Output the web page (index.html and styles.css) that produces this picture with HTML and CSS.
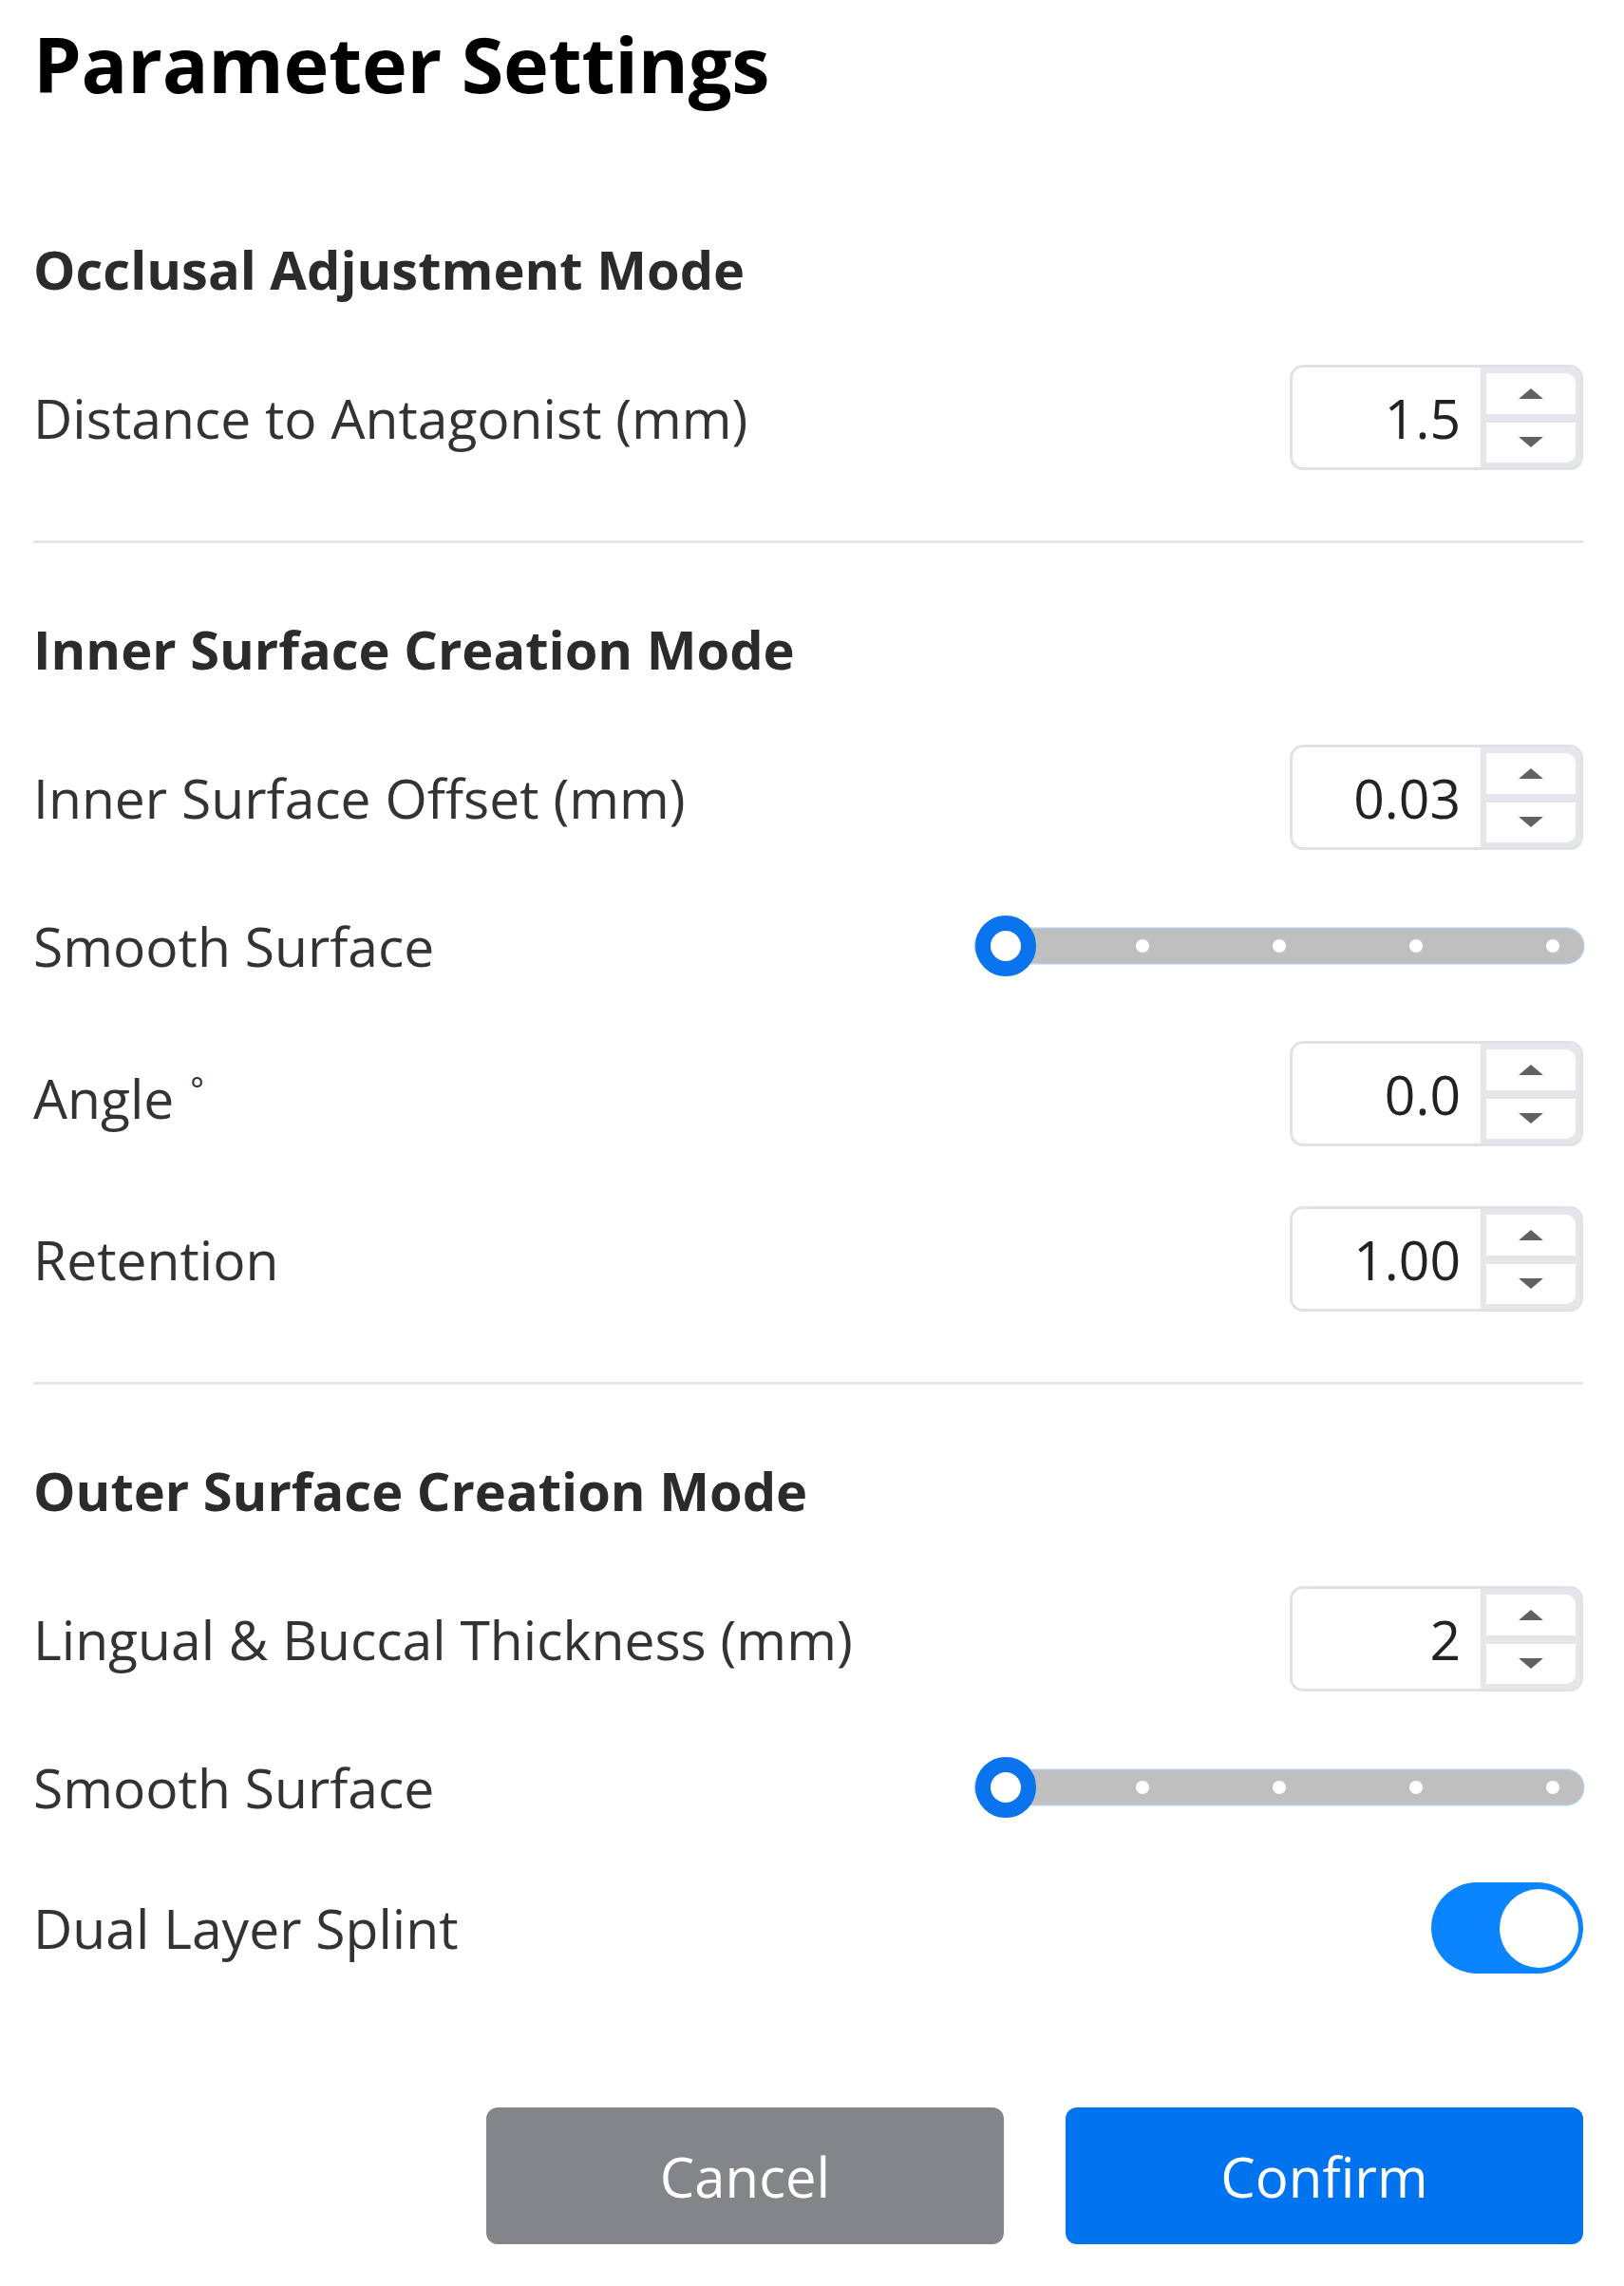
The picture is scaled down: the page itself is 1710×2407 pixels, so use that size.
FILE: index.html
```html
<!DOCTYPE html>
<html lang="en">
<head>
<meta charset="utf-8">
<title>Parameter Settings</title>
<link rel="stylesheet" href="styles.css">
</head>
<body>
<div class="panel">
  <h1 class="title">Parameter Settings</h1>

  <section class="section section-first">
    <h2 class="heading">Occlusal Adjustment Mode</h2>
    <div class="row">
      <span class="label">Distance to Antagonist (mm)</span>
      <div class="numbox">
        <div class="val">1.5</div>
        <div class="spin">
          <div class="spin-btn spin-up"><span class="arrow-up"></span></div>
          <div class="spin-btn spin-down"><span class="arrow-down"></span></div>
        </div>
      </div>
    </div>
  </section>

  <hr class="divider">

  <section class="section">
    <h2 class="heading">Inner Surface Creation Mode</h2>
    <div class="row">
      <span class="label">Inner Surface Offset (mm)</span>
      <div class="numbox">
        <div class="val">0.03</div>
        <div class="spin">
          <div class="spin-btn spin-up"><span class="arrow-up"></span></div>
          <div class="spin-btn spin-down"><span class="arrow-down"></span></div>
        </div>
      </div>
    </div>
    <div class="row">
      <span class="label">Smooth Surface</span>
      <div class="slider">
        <div class="track">
          <span class="dot"></span><span class="dot"></span><span class="dot"></span><span class="dot"></span><span class="dot"></span>
        </div>
        <span class="thumb" style="left:0%"></span>
      </div>
    </div>
    <div class="row row-angle">
      <span class="label">Angle <span class="deg">°</span></span>
      <div class="numbox">
        <div class="val">0.0</div>
        <div class="spin">
          <div class="spin-btn spin-up"><span class="arrow-up"></span></div>
          <div class="spin-btn spin-down"><span class="arrow-down"></span></div>
        </div>
      </div>
    </div>
    <div class="row">
      <span class="label">Retention</span>
      <div class="numbox">
        <div class="val">1.00</div>
        <div class="spin">
          <div class="spin-btn spin-up"><span class="arrow-up"></span></div>
          <div class="spin-btn spin-down"><span class="arrow-down"></span></div>
        </div>
      </div>
    </div>
  </section>

  <hr class="divider">

  <section class="section">
    <h2 class="heading">Outer Surface Creation Mode</h2>
    <div class="row">
      <span class="label">Lingual &amp; Buccal Thickness (mm)</span>
      <div class="numbox">
        <div class="val">2</div>
        <div class="spin">
          <div class="spin-btn spin-up"><span class="arrow-up"></span></div>
          <div class="spin-btn spin-down"><span class="arrow-down"></span></div>
        </div>
      </div>
    </div>
    <div class="row">
      <span class="label">Smooth Surface</span>
      <div class="slider">
        <div class="track">
          <span class="dot"></span><span class="dot"></span><span class="dot"></span><span class="dot"></span><span class="dot"></span>
        </div>
        <span class="thumb" style="left:0%"></span>
      </div>
    </div>
    <div class="row row-toggle">
      <span class="label">Dual Layer Splint</span>
      <div class="toggle"><span class="knob"></span></div>
    </div>
  </section>

  <div class="actions">
    <button class="btn btn-cancel" type="button">Cancel</button>
    <button class="btn btn-confirm" type="button">Confirm</button>
  </div>
</div>
</body>
</html>
```

FILE: styles.css
```css
html, body {
  margin: 0;
  padding: 0;
  background: #ffffff;
}

body {
  font-family: "Open Sans", "Noto Sans", sans-serif;
  color: #333333;
}

.panel {
  width: 1710px;
  min-height: 2407px;
  box-sizing: border-box;
  padding: 17px 43px 0 35px;
  display: flex;
  flex-direction: column;
}

.title {
  margin: 0;
  font-size: 81px;
  font-weight: 700;
  line-height: 100px;
  height: 100px;
  color: #000000;
  letter-spacing: -0.3px;
}

.section {
  display: flex;
  flex-direction: column;
}

.section-first {
  margin-top: 126px;
}

.heading {
  margin: 0 0 61px 0;
  font-size: 56px;
  font-weight: 700;
  line-height: 80px;
  height: 80px;
  color: #2b2b2b;
}

.row {
  display: flex;
  align-items: center;
  justify-content: space-between;
  height: 111px;
}

.row + .row {
  margin-top: 45px;
}

.row-angle {
  margin-bottom: 18px;
}

.row-toggle {
  height: 96px;
}

.label {
  font-size: 57px;
  line-height: 80px;
  color: #333333;
}

.deg {
  font-size: 34px;
  vertical-align: 18px;
  margin-left: 2px;
}

.divider {
  margin: 74px 0 71px 0;
  border: 0;
  height: 3px;
  background: #e6e6e6;
}

/* number input */
.numbox {
  display: flex;
  width: 309px;
  height: 111px;
  box-sizing: border-box;
  border: 3px solid #dfe2e7;
  border-radius: 14px;
  overflow: hidden;
  background: #ffffff;
}

.val {
  flex: 1;
  display: flex;
  align-items: center;
  justify-content: flex-end;
  padding-right: 21px;
  font-size: 57px;
  color: #222222;
}

.spin {
  width: 105px;
  box-sizing: border-box;
  background: #e4e6ea;
  display: flex;
  flex-direction: column;
  gap: 9px;
  padding: 6px 5px 5px 6px;
}

.spin-btn {
  flex: 1;
  background: #ffffff;
  display: flex;
  align-items: center;
  justify-content: center;
}

.spin-up {
  border-radius: 0 10px 0 0;
}

.spin-down {
  border-radius: 0 0 10px 0;
}

.arrow-up {
  width: 0;
  height: 0;
  border-left: 13px solid transparent;
  border-right: 13px solid transparent;
  border-bottom: 11px solid #616161;
}

.arrow-down {
  width: 0;
  height: 0;
  border-left: 13px solid transparent;
  border-right: 13px solid transparent;
  border-top: 11px solid #616161;
}

/* slider */
.slider {
  position: relative;
  width: 640px;
  height: 64px;
  display: flex;
  align-items: center;
}

.track {
  width: 100%;
  height: 36px;
  box-sizing: border-box;
  border-radius: 18px;
  background: #bfbfbf;
  box-shadow: 0 0 0 1.5px #b9cde8;
  display: flex;
  align-items: center;
  justify-content: space-between;
  padding: 0 25px;
}

.dot {
  width: 14px;
  height: 14px;
  border-radius: 50%;
  background: #ffffff;
}

.thumb {
  position: absolute;
  top: 0;
  width: 64px;
  height: 64px;
  box-sizing: border-box;
  border-radius: 50%;
  border: 16px solid #0a74ee;
  background: #ffffff;
}

/* toggle */
.toggle {
  width: 160px;
  height: 96px;
  box-sizing: border-box;
  border-radius: 48px;
  background: #0a84ff;
  display: flex;
  align-items: center;
  justify-content: flex-end;
  padding-right: 5px;
}

.knob {
  width: 83px;
  height: 83px;
  border-radius: 50%;
  background: #ffffff;
}

/* actions */
.actions {
  margin-top: 141px;
  display: flex;
  justify-content: flex-end;
  gap: 65px;
}

.btn {
  width: 545px;
  height: 144px;
  border: 0;
  border-radius: 12px;
  font-family: "Open Sans", "Noto Sans", sans-serif;
  font-size: 58px;
  color: #ffffff;
  cursor: pointer;
}

.btn-cancel {
  background: #838589;
}

.btn-confirm {
  background: #0073ee;
}
```
